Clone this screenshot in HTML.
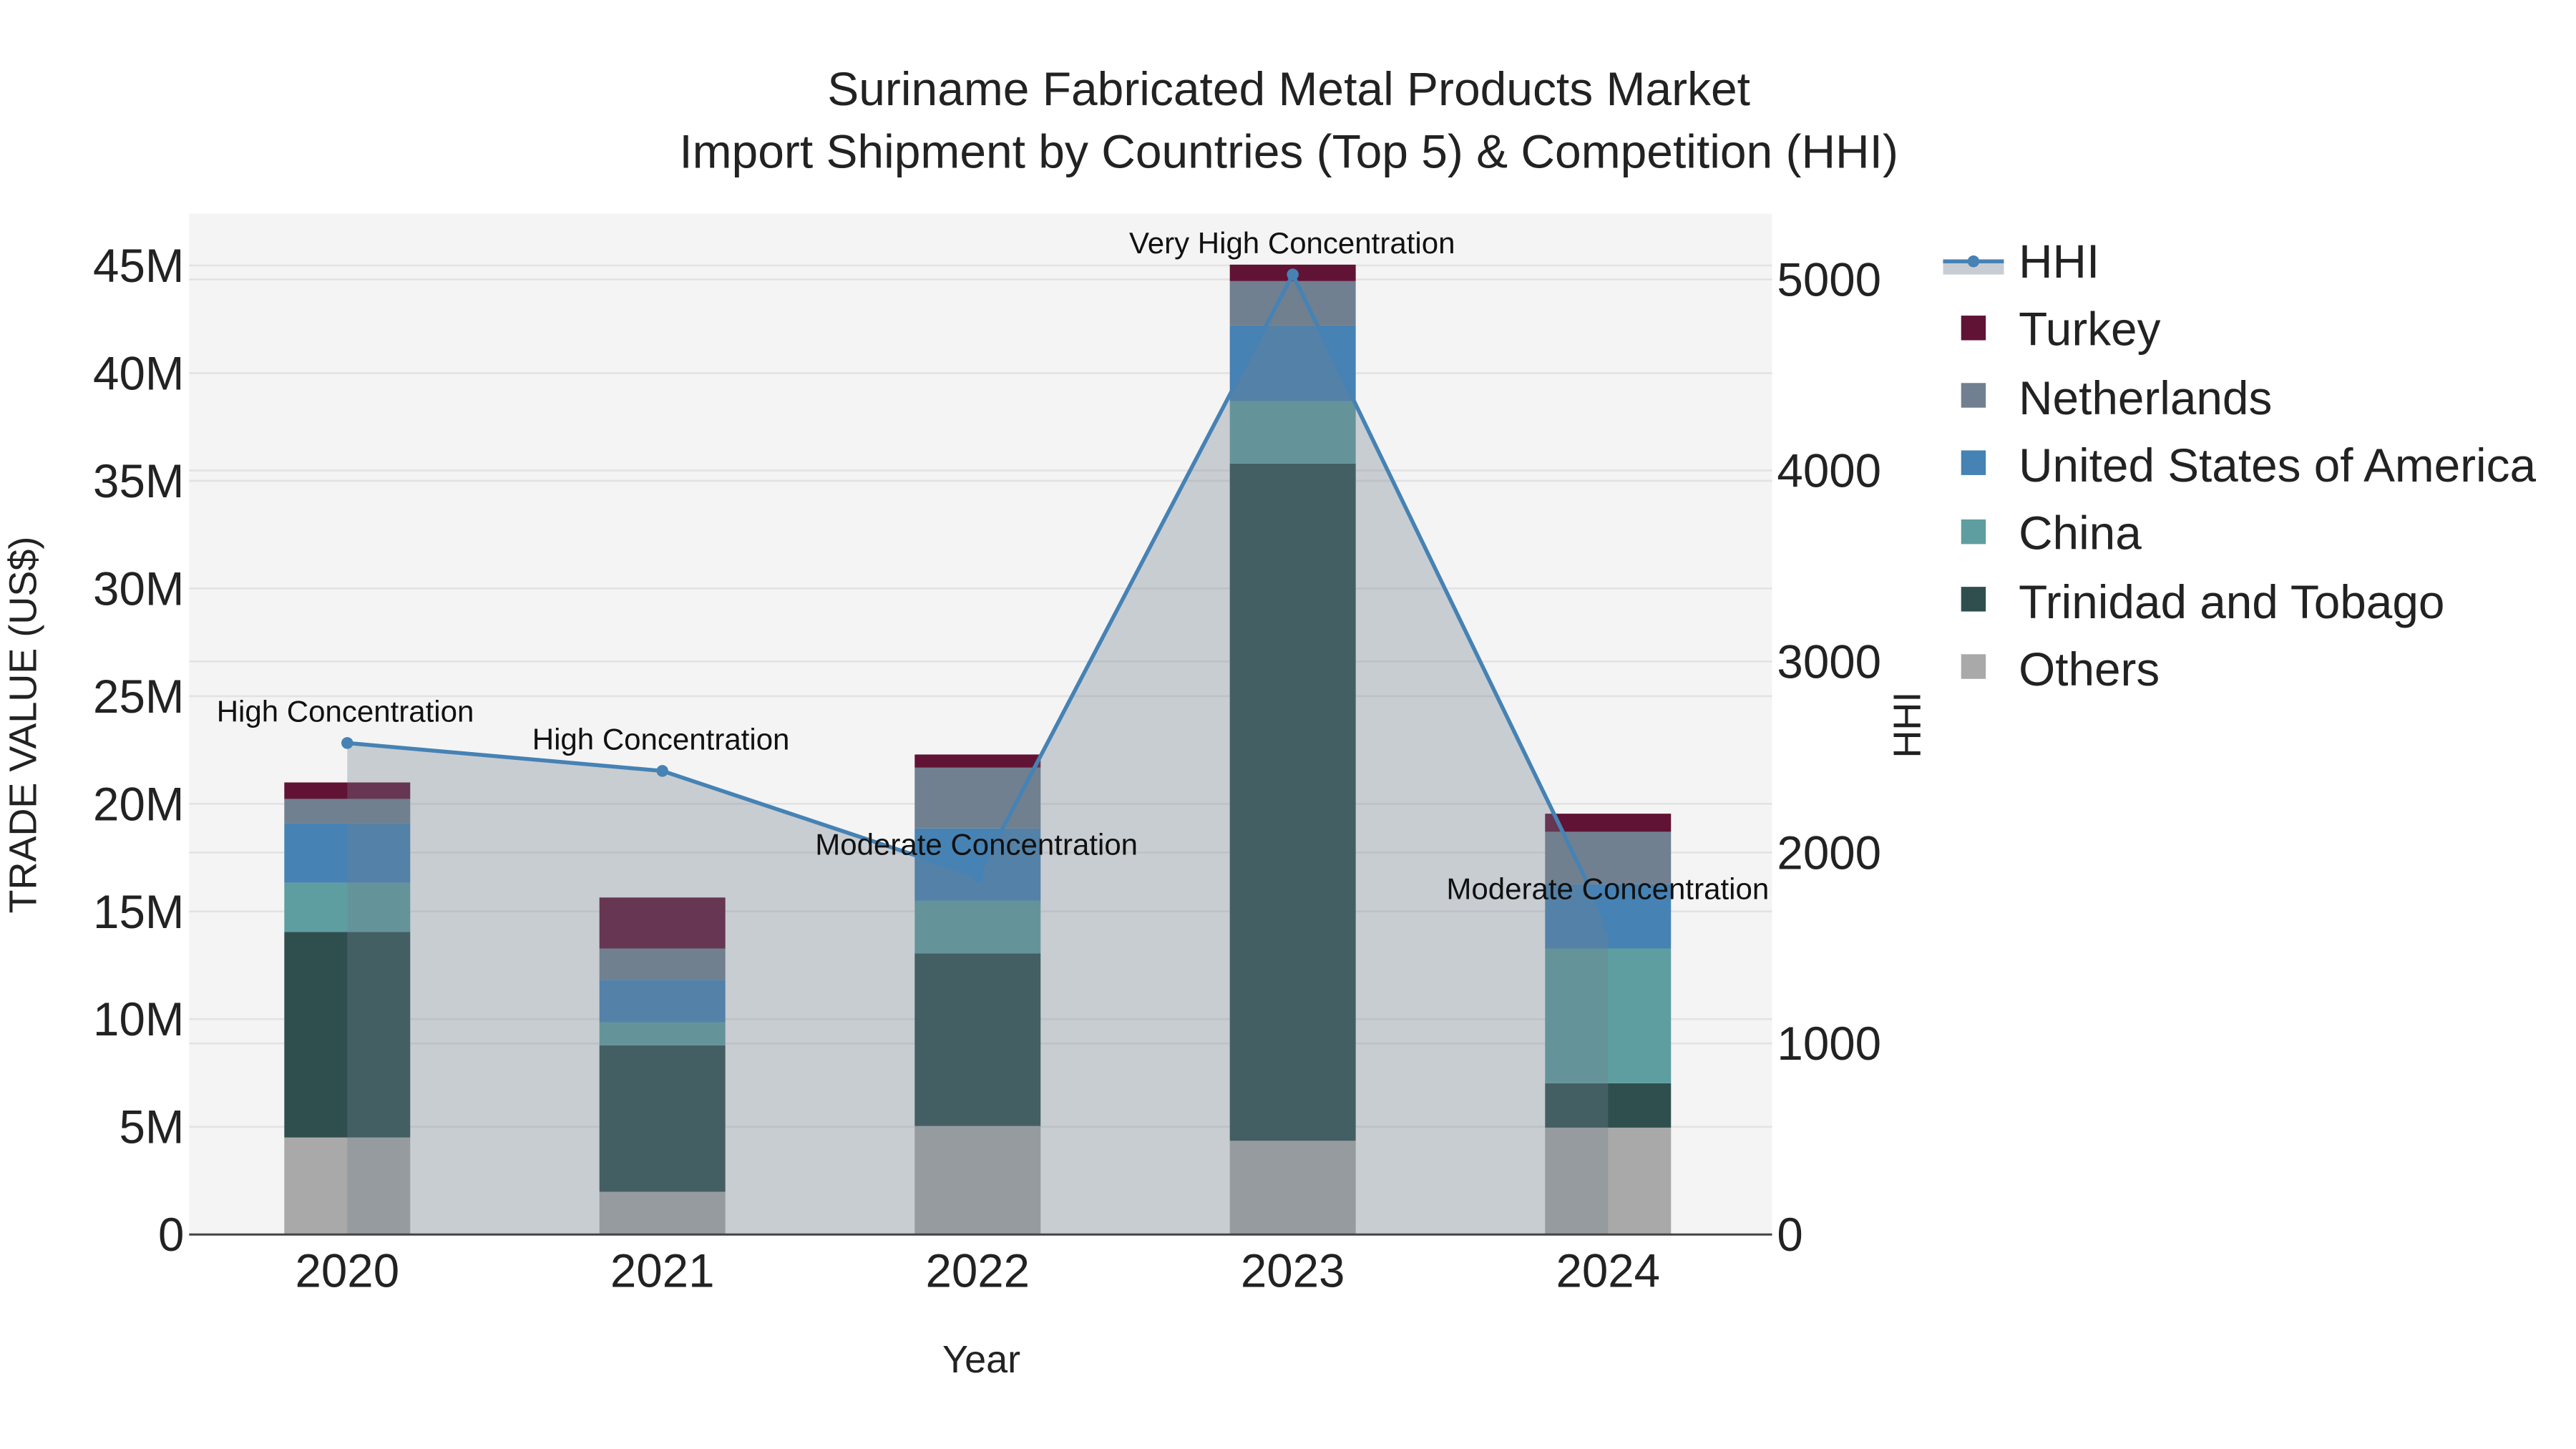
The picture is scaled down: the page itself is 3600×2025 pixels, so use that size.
<!DOCTYPE html>
<html><head><meta charset="utf-8"><style>html,body{margin:0;padding:0;background:#fff;}svg{display:block;}</style></head>
<body>
<svg width="3600" height="2025" viewBox="0 0 1567 881.5" xmlns="http://www.w3.org/2000/svg" font-family="'Liberation Sans', sans-serif">
<rect x="0" y="0" width="1567" height="882" fill="#fff"/>
<rect x="115" y="130" width="963" height="621" fill="#f4f4f4"/>
<g stroke="#e3e3e3" stroke-width="1.2">
<line x1="115" x2="1078" y1="685.5" y2="685.5"/><line x1="115" x2="1078" y1="620" y2="620"/>
<line x1="115" x2="1078" y1="554.5" y2="554.5"/><line x1="115" x2="1078" y1="489" y2="489"/>
<line x1="115" x2="1078" y1="423.5" y2="423.5"/><line x1="115" x2="1078" y1="358" y2="358"/>
<line x1="115" x2="1078" y1="292.5" y2="292.5"/><line x1="115" x2="1078" y1="227" y2="227"/>
<line x1="115" x2="1078" y1="161.5" y2="161.5"/>
<line x1="115" x2="1078" y1="634.8" y2="634.8"/><line x1="115" x2="1078" y1="518.6" y2="518.6"/>
<line x1="115" x2="1078" y1="402.4" y2="402.4"/><line x1="115" x2="1078" y1="286.2" y2="286.2"/>
<line x1="115" x2="1078" y1="170" y2="170"/>
</g>
<g>
<rect x="172.9" width="76.6" y="692" height="59" fill="#a9a9a9"/>
<rect x="172.9" width="76.6" y="567" height="125" fill="#2f4f4f"/>
<rect x="172.9" width="76.6" y="537" height="30" fill="#5f9ea0"/>
<rect x="172.9" width="76.6" y="501" height="36" fill="#4682b4"/>
<rect x="172.9" width="76.6" y="486" height="15" fill="#708090"/>
<rect x="172.9" width="76.6" y="476" height="10" fill="#611335"/>
<rect x="364.6" width="76.6" y="725" height="26" fill="#a9a9a9"/>
<rect x="364.6" width="76.6" y="636" height="89" fill="#2f4f4f"/>
<rect x="364.6" width="76.6" y="622" height="14" fill="#5f9ea0"/>
<rect x="364.6" width="76.6" y="596" height="26" fill="#4682b4"/>
<rect x="364.6" width="76.6" y="577" height="19" fill="#708090"/>
<rect x="364.6" width="76.6" y="546" height="31" fill="#611335"/>
<rect x="556.4" width="76.6" y="685" height="66" fill="#a9a9a9"/>
<rect x="556.4" width="76.6" y="580" height="105" fill="#2f4f4f"/>
<rect x="556.4" width="76.6" y="548" height="32" fill="#5f9ea0"/>
<rect x="556.4" width="76.6" y="504" height="44" fill="#4682b4"/>
<rect x="556.4" width="76.6" y="467" height="37" fill="#708090"/>
<rect x="556.4" width="76.6" y="459" height="8" fill="#611335"/>
<rect x="748.1" width="76.6" y="694" height="57" fill="#a9a9a9"/>
<rect x="748.1" width="76.6" y="282" height="412" fill="#2f4f4f"/>
<rect x="748.1" width="76.6" y="244" height="38" fill="#5f9ea0"/>
<rect x="748.1" width="76.6" y="198" height="46" fill="#4682b4"/>
<rect x="748.1" width="76.6" y="171" height="27" fill="#708090"/>
<rect x="748.1" width="76.6" y="161" height="10" fill="#611335"/>
<rect x="939.9" width="76.6" y="686" height="65" fill="#a9a9a9"/>
<rect x="939.9" width="76.6" y="659" height="27" fill="#2f4f4f"/>
<rect x="939.9" width="76.6" y="577" height="82" fill="#5f9ea0"/>
<rect x="939.9" width="76.6" y="538" height="39" fill="#4682b4"/>
<rect x="939.9" width="76.6" y="506" height="32" fill="#708090"/>
<rect x="939.9" width="76.6" y="495" height="11" fill="#611335"/>
</g>
<polygon points="211.2,751 211.2,452 402.9,469 594.7,533 786.4,167 978.2,563 978.2,751" fill="rgba(112,128,144,0.33)"/>
<polyline points="211.2,452 402.9,469 594.7,533 786.4,167 978.2,563" fill="none" stroke="#4682b4" stroke-width="2.4"/>
<g fill="#4682b4"><circle cx="211.2" cy="452" r="3.6"/><circle cx="402.9" cy="469" r="3.6"/><circle cx="594.7" cy="533" r="3.6"/><circle cx="786.4" cy="167" r="3.6"/><circle cx="978.2" cy="563" r="3.6"/></g>
<line x1="115" x2="1078" y1="751" y2="751" stroke="#444" stroke-width="1.3"/>
<g font-size="18.3" fill="#111" text-anchor="middle">
<text x="210" y="439">High Concentration</text>
<text x="402" y="456">High Concentration</text>
<text x="594" y="520">Moderate Concentration</text>
<text x="786" y="154">Very High Concentration</text>
<text x="978" y="547">Moderate Concentration</text>
</g>
<g font-size="28.5" fill="#222" text-anchor="end">
<text x="112" y="761">0</text><text x="112" y="695.5">5M</text><text x="112" y="630">10M</text>
<text x="112" y="564.5">15M</text><text x="112" y="499">20M</text><text x="112" y="433.5">25M</text>
<text x="112" y="368">30M</text><text x="112" y="302.5">35M</text><text x="112" y="237">40M</text>
<text x="112" y="171.5">45M</text>
</g>
<g font-size="28.5" fill="#222" text-anchor="start">
<text x="1081" y="761">0</text><text x="1081" y="644.8">1000</text><text x="1081" y="528.6">2000</text>
<text x="1081" y="412.4">3000</text><text x="1081" y="296.2">4000</text><text x="1081" y="180">5000</text>
</g>
<g font-size="28.5" fill="#222" text-anchor="middle">
<text x="211.2" y="783">2020</text><text x="402.9" y="783">2021</text><text x="594.7" y="783">2022</text>
<text x="786.4" y="783">2023</text><text x="978.2" y="783">2024</text>
</g>
<text x="597" y="835" font-size="23.5" fill="#222" text-anchor="middle">Year</text>
<text transform="translate(22,441) rotate(-90)" font-size="23.5" fill="#222" text-anchor="middle">TRADE VALUE (US$)</text>
<text transform="translate(1168,441) rotate(-90)" font-size="23.5" fill="#222" text-anchor="middle">HHI</text>
<g font-size="28.7" fill="#222" text-anchor="middle">
<text x="784" y="64">Suriname Fabricated Metal Products Market</text>
<text x="784" y="102">Import Shipment by Countries (Top 5) &amp; Competition (HHI)</text>
</g>
<rect x="1182" y="159" width="37" height="8" fill="#c8cdd4"/>
<line x1="1182" x2="1219" y1="159" y2="159" stroke="#4682b4" stroke-width="2.4"/>
<circle cx="1200.5" cy="159" r="3.6" fill="#4682b4"/>
<rect x="1193" y="192" width="15" height="15" fill="#611335"/>
<rect x="1193" y="233" width="15" height="15" fill="#708090"/>
<rect x="1193" y="274" width="15" height="15" fill="#4682b4"/>
<rect x="1193" y="316" width="15" height="15" fill="#5f9ea0"/>
<rect x="1193" y="357" width="15" height="15" fill="#2f4f4f"/>
<rect x="1193" y="398" width="15" height="15" fill="#a9a9a9"/>
<g font-size="28.6" fill="#222">
<text x="1228" y="169">HHI</text>
<text x="1228" y="210">Turkey</text>
<text x="1228" y="252">Netherlands</text>
<text x="1228" y="293">United States of America</text>
<text x="1228" y="334">China</text>
<text x="1228" y="376">Trinidad and Tobago</text>
<text x="1228" y="417">Others</text>
</g>
</svg>
</body></html>
